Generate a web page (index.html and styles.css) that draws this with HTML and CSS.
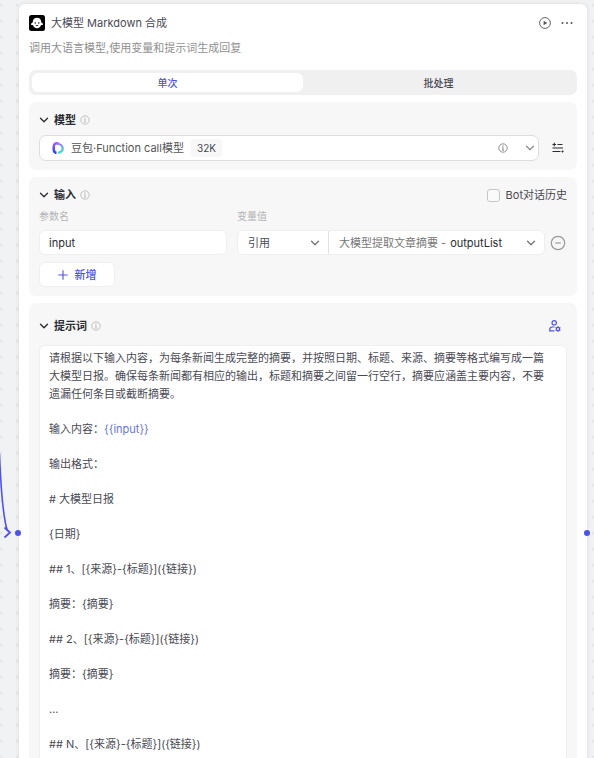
FILE: index.html
```html
<!DOCTYPE html>
<html lang="zh-CN">
<head>
  <meta charset="UTF-8" />
  <meta name="viewport" content="width=device-width, initial-scale=1.0"/>
  <title>大模型 Markdown 合成</title>
  <link rel="stylesheet" href="styles.css">
</head>
<body>
  <svg class="sprite" aria-hidden="true">
    <symbol id="chevron" viewBox="0 0 10 10"><path d="M1.5 3.2 5 6.8l3.5-3.6" fill="none" stroke="currentColor" stroke-width="1.3" stroke-linecap="round" stroke-linejoin="round"/></symbol>
    <symbol id="info" viewBox="0 0 10 10"><g fill="none" stroke="currentColor" stroke-width=".8"><circle cx="5" cy="5" r="4.2"/><path d="M4.2 4.3H5v2.8M4 7.1h2"/></g><circle cx="5" cy="2.9" r=".6" fill="currentColor"/></symbol>
  </svg>

  <main class="canvas">
    <svg class="edge" width="20" height="90" viewBox="0 0 20 90" fill="none" stroke="#4d53e8" aria-hidden="true">
      <path d="M-.5 4C1 42 3 68 7.500 81" stroke-width="1.6"/>
      <path d="M4.500 77.500 10 82.500 4.500 87.500" stroke-width="1.8"/>
    </svg>

    <article class="node">
      <span class="port port-in"></span>
      <span class="port port-out"></span>

      <header class="node-header">
        <svg class="avatar" viewBox="0 0 16 16" aria-hidden="true">
          <rect width="16" height="16" rx="2.500" fill="#000"/>
          <path d="M8 2.800c2.500 0 4 1.600 4.200 4 .1.900.5 1 1.300 1.400.8.500.7 1.700-.2 1.900-.6.100-1 0-1.500.3-.7 1.700-2 2.800-3.800 2.800s-3.100-1.100-3.800-2.800c-.5-.3-.9-.2-1.500-.3-.9-.2-1-1.400-.2-1.900.8-.4 1.200-.5 1.300-1.400.2-2.400 1.700-4 4.200-4z" fill="#fff"/>
          <circle cx="6.200" cy="8" r=".7"/><circle cx="9.800" cy="8" r=".7"/>
          <path d="M6.800 10.200q1.200 1 2.400 0" fill="none" stroke="#000" stroke-width=".8"/>
        </svg>
        <h1>大模型 Markdown 合成</h1>
        <button class="icon-btn" aria-label="运行">
          <svg width="12" height="12" viewBox="0 0 12 12"><circle cx="6" cy="6" r="5.400" fill="none" stroke="currentColor" stroke-width=".9"/><path d="M4.600 3.700v4.600L8.300 6z" fill="currentColor"/></svg>
        </button>
        <button class="icon-btn" aria-label="更多">
          <svg width="12" height="12" viewBox="0 0 12 12" fill="currentColor"><circle cx="1.500" cy="6" r="1"/><circle cx="6" cy="6" r="1"/><circle cx="10.500" cy="6" r="1"/></svg>
        </button>
      </header>
      <p class="desc">调用大语言模型,使用变量和提示词生成回复</p>

      <div class="tabs" role="tablist">
        <button class="tab active" role="tab" aria-selected="true">单次</button>
        <button class="tab" role="tab" aria-selected="false">批处理</button>
      </div>

      <section class="panel">
        <div class="panel-title">
          <svg class="arrow"><use href="#chevron"/></svg>
          <h2>模型</h2>
          <svg class="info"><use href="#info"/></svg>
        </div>
        <div class="model-row">
          <div class="model-select">
            <svg width="12" height="12" viewBox="0 0 12 12" fill="none" aria-hidden="true">
              <defs>
                <linearGradient id="left" x1="0" y1="0" x2="0" y2="1"><stop offset="0" stop-color="#a45cff"/><stop offset="1" stop-color="#2a3dff"/></linearGradient>
                <linearGradient id="right" x1="0" y1="0" x2="0" y2="1"><stop offset="0" stop-color="#b06cff"/><stop offset=".4" stop-color="#46b8f0"/><stop offset="1" stop-color="#3fe0c0"/></linearGradient>
              </defs>
              <path d="M6.500 1.600C3.500.8 2 1.500 1.800 4.500 1.600 8 1.600 10.800 4.500 10.800" stroke="url(#left)" stroke-width="2.600"/>
              <path d="M5 1.500c3 .4 5.700 2.500 5.700 5 0 2.400-2 3.800-4.700 4.300" stroke="url(#right)" stroke-width="2.200"/>
            </svg>
            <select aria-label="模型"><option>豆包·Function call模型</option></select>
            <span class="tag">32K</span>
            <svg class="info model-info"><use href="#info"/></svg>
            <svg class="arrow model-arrow"><use href="#chevron"/></svg>
          </div>
          <button class="icon-btn dark" aria-label="模型设置">
            <svg width="12" height="12" viewBox="0 0 12 12" fill="none" stroke="currentColor" stroke-width="1.100"><path d="M.5 2.500h3.600M2.300.8v3.400M5.500 2.500h5M.5 6h10.500M.5 9.500h8M9.500 9.500h2M10.500 8.500v2"/></svg>
          </button>
        </div>
      </section>

      <section class="panel">
        <div class="panel-title">
          <svg class="arrow"><use href="#chevron"/></svg>
          <h2>输入</h2>
          <svg class="info"><use href="#info"/></svg>
          <label class="history"><input type="checkbox">Bot对话历史</label>
        </div>
        <div class="params">
          <label class="caption" for="param-name">参数名</label>
          <label class="caption" for="param-type">变量值</label>
          <span></span>
          <input class="field" id="param-name" type="text" value="input">
          <div class="value-group">
            <div class="value-type">
              <select id="param-type"><option>引用</option></select>
              <svg class="arrow"><use href="#chevron"/></svg>
            </div>
            <div class="value-ref">
              <label for="param-ref">大模型提取文章摘要 -</label>
              <select id="param-ref"><option>outputList</option></select>
              <svg class="arrow"><use href="#chevron"/></svg>
            </div>
          </div>
          <button class="icon-btn muted" aria-label="删除">
            <svg width="16" height="16" viewBox="0 0 16 16" fill="none" stroke="currentColor" stroke-width="1.200"><circle cx="8" cy="8" r="6.700"/><path d="M5.200 8h5.600"/></svg>
          </button>
        </div>
        <button class="add">
          <svg width="10" height="10" viewBox="0 0 10 10" stroke="currentColor" stroke-width="1.100" aria-hidden="true"><path d="M5 .3v9.400M.3 5h9.400"/></svg>
          新增
        </button>
      </section>

      <section class="panel prompt">
        <div class="panel-title">
          <svg class="arrow"><use href="#chevron"/></svg>
          <h2>提示词</h2>
          <svg class="info"><use href="#info"/></svg>
          <button class="icon-btn persona" aria-label="提示词设置">
            <svg width="12" height="12" viewBox="0 0 12 12" fill="none" stroke="currentColor" stroke-width="1.200"><circle cx="5.200" cy="2.800" r="2.200"/><path d="M5.600 7H3.200C1.700 7 .8 8 .8 9.400v1.500h4.600"/><circle cx="9" cy="9" r="1.700"/><path d="M9 6.200v1M9 10.800v1M6.600 7.600l.9.500M10.500 9.900l.9.500M6.600 10.400l.9-.5M10.500 8.100l.9-.5"/></svg>
          </button>
        </div>
        <div class="editor" contenteditable="true" spellcheck="false" role="textbox" aria-multiline="true" aria-label="提示词">
          <p>请根据以下输入内容，为每条新闻生成完整的摘要，并按照日期、标题、来源、摘要等格式编写成一篇大模型日报。确保每条新闻都有相应的输出，标题和摘要之间留一行空行，摘要应涵盖主要内容，不要遗漏任何条目或截断摘要。</p>
          <p>输入内容：<span class="var">{{input}}</span></p>
          <p>输出格式：</p>
          <p># 大模型日报</p>
          <p>{日期}</p>
          <p>## 1、[{来源}-{标题}]({链接})</p>
          <p>摘要：{摘要}</p>
          <p>## 2、[{来源}-{标题}]({链接})</p>
          <p>摘要：{摘要}</p>
          <p>...</p>
          <p>## N、[{来源}-{标题}]({链接})</p>
        </div>
      </section>
    </article>
  </main>
</body>
</html>
```
FILE: styles.css
```css
:root {
  --primary: #4d53e8;
  --text: #4a4a54;
  --strong: #2a2b33;
  --muted: #909090;
  --panel: #f7f7f7;
  --line: #efeff0;
}
* {
  box-sizing: border-box;
}
body {
  margin: 0;
  font-family: Inter, "Noto Sans CJK SC", sans-serif;
  font-size: 11px;
  line-height: 18px;
  color: var(--text);
}
h1, h2, p {
  margin: 0;
}
h1 {
  flex: 1;
  font-size: 11px;
  font-weight: 400;
}
h2 {
  font-size: 11px;
  font-weight: 600;
  color: var(--strong);
}
button, input, select {
  font: inherit;
  color: inherit;
}
button {
  padding: 0;
  border: none;
  background: none;
  cursor: pointer;
}
select {
  appearance: none;
  padding: 0;
  border: none;
  background: none;
  min-width: 0;
}
svg {
  display: block;
  flex: none;
}
.sprite {
  position: absolute;
  width: 0;
  height: 0;
}
.canvas {
  position: relative;
  height: 100vh;
  overflow: hidden;
  padding: 4px 7px 0 19px;
  background-color: #f1f2f4;
  background-image: radial-gradient(circle at 1px 5px, #e6e7ea 1px, transparent 2px);
  background-size: 16px 16px;
}
.edge {
  position: absolute;
  left: 0;
  top: 450px;
}
.node {
  position: relative;
  display: flex;
  flex-direction: column;
  padding: 10px;
  border-radius: 6px;
  background: #fff;
  box-shadow: 0 0 4px rgba(0,0,0,0.1);
}
.port {
  position: absolute;
  top: 526px;
  width: 6px;
  height: 6px;
  border-radius: 50%;
  background: var(--primary);
}
.port-in {
  left: -4px;
}
.port-out {
  right: -3px;
}
.node-header {
  display: flex;
  align-items: center;
  gap: 6px;
  padding-right: 4px;
}
.avatar {
  width: 16px;
  height: 16px;
}
.icon-btn {
  display: flex;
  align-items: center;
  justify-content: center;
  color: #555;
}
.icon-btn + .icon-btn {
  margin-left: 4px;
}
.icon-btn.dark {
  width: 18px;
  color: var(--strong);
}
.icon-btn.muted {
  color: #999;
}
.icon-btn.persona {
  margin-left: auto;
  margin-right: 6px;
  color: var(--primary);
}
.desc {
  margin-top: 7px;
  color: var(--muted);
}

/* tabs */
.tabs {
  display: flex;
  margin-top: 13px;
  padding: 3px;
  border-radius: 7px;
  background: #f0f0f0;
}
.tab {
  flex: 1;
  height: 19px;
  border-radius: 6px;
  font-size: 10px;
  font-weight: 500;
}
.tab.active {
  background: #fff;
  color: var(--primary);
}

/* panels */
.panel {
  margin-top: 7px;
  padding: 9px 10px;
  border-radius: 7px;
  background: var(--panel);
}
.panel.prompt {
  padding-top: 14px;
}
.panel-title {
  display: flex;
  align-items: center;
  height: 18px;
}
.panel-title h2 {
  margin: 0 4px 0 5px;
}
.arrow {
  width: 10px;
  height: 10px;
  color: var(--strong);
}
.info {
  width: 10px;
  height: 10px;
  color: #b4b4b4;
}
.model-row {
  display: flex;
  align-items: center;
  gap: 10px;
  margin-top: 6px;
}
.model-select {
  flex: 1;
  display: flex;
  align-items: center;
  height: 26px;
  padding: 0 3px 0 12px;
  border: 1px solid #ddd;
  border-radius: 7px;
  background: #fff;
}
.model-select select {
  margin: 0 7px 0 7px;
  color: #555;
}
.tag {
  padding: 0 6px;
  border-radius: 4px;
  background: var(--panel);
  font-size: 10px;
}
.model-info {
  margin-left: auto;
  margin-right: 17px;
  color: #777;
}
.model-arrow {
  color: var(--muted);
}

/* inputs */
.history {
  display: flex;
  align-items: center;
  gap: 6px;
  margin-left: auto;
}
.history input {
  appearance: none;
  width: 13px;
  height: 13px;
  margin: 0;
  border: 1px solid #c6c6c9;
  border-radius: 3px;
  background: #fafafa;
}
.params {
  display: grid;
  grid-template-columns: 188fr 308fr 12px;
  align-items: center;
  column-gap: 10px;
  row-gap: 5px;
  margin-top: 3px;
}
.params .icon-btn {
  margin-left: -7px;
}
.caption {
  font-size: 10px;
  color: #b4b4b8;
}
.field {
  width: 100%;
  min-width: 0;
  height: 25px;
  padding: 0 9px;
  border: 1px solid var(--line);
  border-radius: 6px;
  background: #fff;
  color: var(--strong);
}
.value-group {
  display: flex;
  height: 25px;
  border: 1px solid var(--line);
  border-radius: 6px;
  background: #fff;
}
.value-type, .value-ref {
  display: flex;
  align-items: center;
  padding: 0 8px 0 10px;
}
.value-group select {
  flex: 1;
}
.value-group .arrow {
  color: #777;
}
.value-type {
  width: 91px;
  border-right: 1px solid #e2e2e2;
}
.value-ref {
  flex: 1;
  gap: 4px;
}
.value-ref label {
  white-space: nowrap;
  color: #777;
}
.value-ref select {
  color: var(--strong);
}
.add {
  display: flex;
  align-items: center;
  justify-content: center;
  gap: 7px;
  width: 76px;
  height: 25px;
  margin-top: 7px;
  border: 1px solid var(--line);
  border-radius: 6px;
  background: #fff;
  color: var(--primary);
  font-weight: 500;
}

/* prompt */
.editor {
  display: flex;
  flex-direction: column;
  gap: 17px;
  min-height: 440px;
  margin-top: 10px;
  padding: 3px 12px 8px 9px;
  border: 1px solid #f0f0f0;
  border-radius: 6px;
  background: #fff;
  outline: none;
}
.var {
  color: #6675d9;
}
```
